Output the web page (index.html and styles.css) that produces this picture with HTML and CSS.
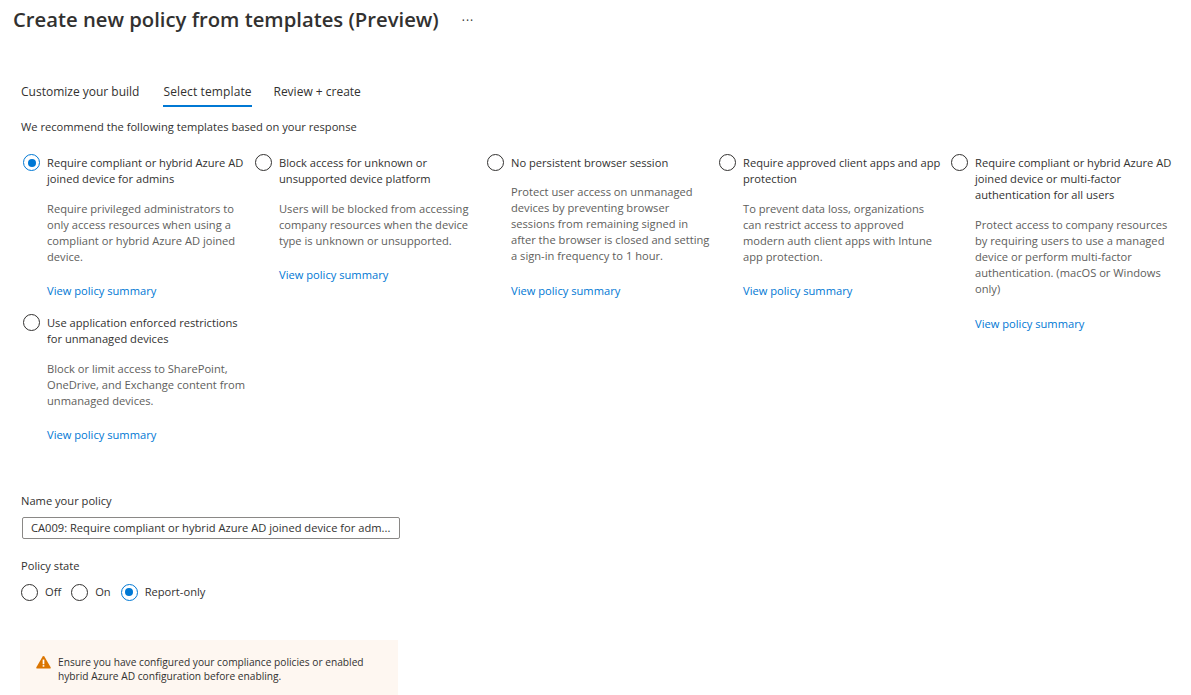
FILE: index.html
```html
<!DOCTYPE html>
<html>
<head>
    <title>Create new policy from templates (Preview)</title>
    <link rel="stylesheet" href="styles.css">
</head>
<body>
    <div class="title-row">
        <h1>Create new policy from templates (Preview)</h1>
        <span class="more">&middot;&middot;&middot;</span>
    </div>

    <div class="tabs">
        <span class="tab">Customize your build</span>
        <span class="tab active">Select template</span>
        <span class="tab">Review + create</span>
    </div>

    <p class="intro">We recommend the following templates based on your response</p>

    <div class="templates">
        <div class="column">
            <div class="template">
                <span class="radio checked"></span>
                <div class="template-body">
                    <div class="template-title">Require compliant or hybrid Azure AD<br>joined device for admins</div>
                    <div class="template-desc">Require privileged administrators to<br>only access resources when using a<br>compliant or hybrid Azure AD joined<br>device.</div>
                    <a class="summary" href="#">View policy summary</a>
                </div>
            </div>
            <div class="template second">
                <span class="radio"></span>
                <div class="template-body">
                    <div class="template-title">Use application enforced restrictions<br>for unmanaged devices</div>
                    <div class="template-desc">Block or limit access to SharePoint,<br>OneDrive, and Exchange content from<br>unmanaged devices.</div>
                    <a class="summary" href="#">View policy summary</a>
                </div>
            </div>
        </div>
        <div class="column">
            <div class="template">
                <span class="radio"></span>
                <div class="template-body">
                    <div class="template-title">Block access for unknown or<br>unsupported device platform</div>
                    <div class="template-desc">Users will be blocked from accessing<br>company resources when the device<br>type is unknown or unsupported.</div>
                    <a class="summary" href="#">View policy summary</a>
                </div>
            </div>
        </div>
        <div class="column">
            <div class="template">
                <span class="radio"></span>
                <div class="template-body">
                    <div class="template-title">No persistent browser session</div>
                    <div class="template-desc tight">Protect user access on unmanaged<br>devices by preventing browser<br>sessions from remaining signed in<br>after the browser is closed and setting<br>a sign-in frequency to 1 hour.</div>
                    <a class="summary wide" href="#">View policy summary</a>
                </div>
            </div>
        </div>
        <div class="column">
            <div class="template">
                <span class="radio"></span>
                <div class="template-body">
                    <div class="template-title">Require approved client apps and app<br>protection</div>
                    <div class="template-desc">To prevent data loss, organizations<br>can restrict access to approved<br>modern auth client apps with Intune<br>app protection.</div>
                    <a class="summary" href="#">View policy summary</a>
                </div>
            </div>
        </div>
        <div class="column">
            <div class="template">
                <span class="radio"></span>
                <div class="template-body">
                    <div class="template-title">Require compliant or hybrid Azure AD<br>joined device or multi-factor<br>authentication for all users</div>
                    <div class="template-desc">Protect access to company resources<br>by requiring users to use a managed<br>device or perform multi-factor<br>authentication. (macOS or Windows<br>only)</div>
                    <a class="summary wide" href="#">View policy summary</a>
                </div>
            </div>
        </div>
    </div>

    <label class="field-label">Name your policy</label>
    <div class="name-input">CA009: Require compliant or hybrid Azure AD joined device for adm...</div>

    <label class="field-label state-label">Policy state</label>
    <div class="state-options">
        <span class="radio"></span><span class="state-text">Off</span>
        <span class="radio"></span><span class="state-text">On</span>
        <span class="radio checked"></span><span class="state-text">Report-only</span>
    </div>

    <div class="warning">
        <svg class="warning-icon" width="15" height="14" viewBox="0 0 16 14">
            <path d="M8 .5c.4 0 .7.2.9.5l6.7 11.6c.4.7-.1 1.4-.9 1.4H1.3c-.8 0-1.3-.7-.9-1.4L7.1 1c.2-.3.5-.5.9-.5z" fill="#db7500"/>
            <rect x="7.1" y="4.4" width="1.8" height="5" fill="#fff"/>
            <rect x="7.1" y="10.3" width="1.8" height="1.7" fill="#fff"/>
        </svg>
        <div>Ensure you have configured your compliance policies or enabled<br>hybrid Azure AD configuration before enabling.</div>
    </div>
</body>
</html>
```

FILE: styles.css
```css
html, body {
    height: 695px;
    overflow: hidden;
}

body {
    margin: 0;
    padding: 0 0 0 21px;
    font-family: "Open Sans", "Noto Sans", sans-serif;
    font-size: 11.15px;
    line-height: 16px;
    color: #323130;
    background-color: #fff;
}

.title-row {
    display: flex;
    align-items: center;
    height: 40px;
    margin-left: -8px;
}

h1 {
    margin: 0 0 2px 0;
    font-size: 20.25px;
    line-height: 38px;
    font-weight: 600;
    color: #323130;
}

.more {
    margin: 2px 0 0 23px;
    font-size: 12px;
    letter-spacing: 1px;
}

.tabs {
    display: flex;
    margin-top: 36px;
    height: 32px;
}

.tab {
    margin-right: 24px;
    padding-top: 8px;
    height: 21px;
    font-size: 12px;
}

.tab.active {
    width: 89px;
    margin-right: 21px;
    letter-spacing: 0.12px;
    border-bottom: 2px solid #0078d4;
}

.intro {
    margin: 11px 0 0 0;
}

.templates {
    display: flex;
    margin-top: 19px;
    margin-left: 2px;
}

.column {
    width: 232px;
    flex: none;
}

.template {
    display: flex;
    gap: 7px;
}

.template.second {
    margin-top: 15px;
}

.radio {
    display: block;
    flex: none;
    width: 17px;
    height: 17px;
    border: 1px solid #323130;
    border-radius: 50%;
    box-sizing: border-box;
    background-color: #fff;
}

.radio.checked {
    border-color: #0078d4;
    position: relative;
}

.radio.checked::after {
    content: "";
    position: absolute;
    left: 3.5px;
    top: 3.5px;
    width: 8px;
    height: 8px;
    border-radius: 50%;
    background-color: #0078d4;
}

.template-body {
    padding-top: 1px;
    white-space: nowrap;
}

.template-desc {
    margin-top: 14px;
    color: #605e5c;
}

.template-desc.tight {
    margin-top: 13px;
}

.summary {
    display: block;
    margin-top: 18px;
    color: #0078d4;
    text-decoration: none;
}

.summary.wide {
    margin-top: 19px;
}

.field-label {
    display: block;
}

.templates + .field-label {
    margin-top: 50px;
}

.name-input {
    width: 378px;
    height: 22px;
    box-sizing: border-box;
    margin: 8px 0 0 1px;
    padding: 2px 8px;
    border: 1px solid #8a8886;
    border-radius: 2px;
    line-height: 16px;
    white-space: nowrap;
}

.state-label {
    margin-top: 19px;
}

.state-options {
    display: flex;
    align-items: center;
    margin-top: 10px;
    height: 16px;
}

.state-text {
    margin: 0 10px 0 7px;
}

.warning {
    display: flex;
    align-items: flex-start;
    gap: 7px;
    width: 378px;
    height: 55px;
    box-sizing: border-box;
    margin: 40px 0 0 -1px;
    padding: 15px 16px 0 16px;
    background-color: #fef7f1;
    font-size: 10.2px;
    line-height: 14px;
}

.warning-icon {
    flex: none;
}
```
